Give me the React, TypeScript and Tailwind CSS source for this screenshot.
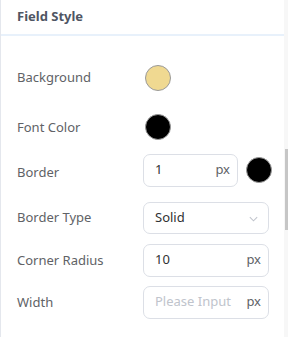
const font = { fontFamily: '"Noto Sans", "Open Sans", Arial, sans-serif' }

const Swatch = ({ color }: { color: string }) => (
  <span
    className="block h-[26px] w-[26px] rounded-full border border-[#9a9a9a]"
    style={{ backgroundColor: color }}
  />
)

const Row = ({ label, className = '', labelClass = '', children }) => (
  <div className={`flex h-8 items-center ${className}`}>
    <div className={`w-[126px] shrink-0 text-[13px] text-[#606266] ${labelClass}`}>{label}</div>
    {children}
  </div>
)

const UnitInput = ({ value, placeholder, width }: { value?: string; placeholder?: string; width: string }) => (
  <div
    className={`flex h-[33px] items-center justify-between rounded-[7px] border border-[#dcdfe6] bg-white pr-[7px] pl-[11px] text-[13px] ${width}`}
  >
    {value ? (
      <span className="text-[#303133]">{value}</span>
    ) : (
      <span className="text-[#c0c4cc]">{placeholder}</span>
    )}
    <span className="text-[#606266]">px</span>
  </div>
)

export default function App() {
  return (
    <div className="relative h-[337px] w-[288px] overflow-hidden border-l border-[#e4e7ed] bg-white" style={font}>
      <div className="flex h-9 items-center border-b-2 border-[#e8f1fb] pl-4">
        <span className="text-[13px] font-bold text-[#4f5563]">Field Style</span>
      </div>

      <div className="pl-4">
        <Row label="Background" className="mt-[26px]">
          <div className="pl-[2px]">
            <Swatch color="#f0d991" />
          </div>
        </Row>
        <Row label="Font Color" className="mt-[17px]" labelClass="pt-[2px]">
          <div className="pl-[2px]">
            <Swatch color="#000000" />
          </div>
        </Row>
        <Row label="Border" className="mt-[11px]" labelClass="pt-[5px]">
          <UnitInput value="1" width="w-[95px]" />
          <div className="ml-[8px]">
            <Swatch color="#000000" />
          </div>
        </Row>
        <Row label="Border Type" className="mt-[16px]">
          <div className="flex h-[32px] w-[126px] items-center justify-between rounded-[7px] border border-[#dcdfe6] bg-white pr-[9px] pl-[11px] text-[13px]">
            <span className="text-[#303133]">Solid</span>
            <svg width="11" height="11" viewBox="0 0 12 12" fill="none" stroke="#c0c4cc" strokeWidth="1.1">
              <path d="M2 4.5l4 4 4-4" />
            </svg>
          </div>
        </Row>
        <Row label="Corner Radius" className="mt-[10px]" labelClass="pt-[2px]">
          <UnitInput value="10" width="w-[126px]" />
        </Row>
        <Row label="Width" className="mt-[10px]" labelClass="pt-[2px]">
          <UnitInput placeholder="Please Input" width="w-[126px]" />
        </Row>
      </div>

      <div className="absolute top-0 right-0 h-full w-[4px] bg-[#f7f7f7]">
        <div className="mt-[149px] ml-[1px] h-[81px] w-[3px] bg-[#c6c6c6]" />
      </div>
    </div>
  )
}
